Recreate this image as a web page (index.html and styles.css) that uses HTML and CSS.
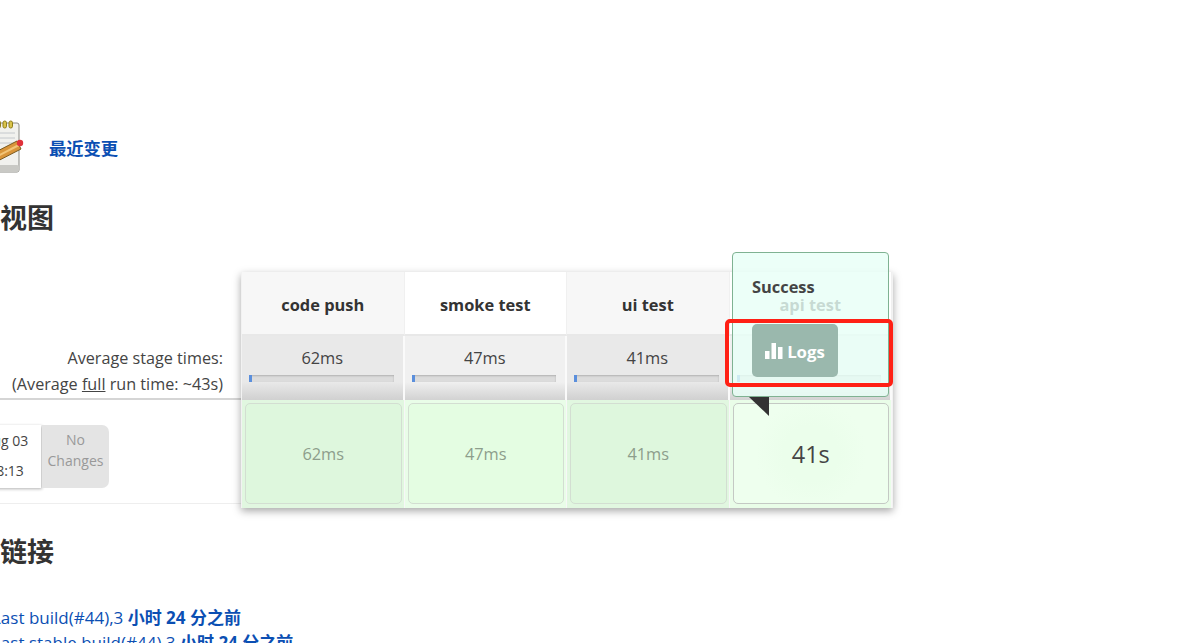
FILE: index.html
```html
<!DOCTYPE html>
<html lang="zh">
<head>
<meta charset="utf-8">
<title>Stage View</title>
<link rel="stylesheet" href="styles.css">
</head>
<body>
<main class="page">
  <div class="changes">
    <svg class="note-icon" width="48" height="56" viewBox="0 0 48 56" aria-hidden="true">
      <rect x="0" y="4" width="30" height="49" rx="2" fill="#f1f1ee" stroke="#8b8b86"/>
      <rect x="0" y="46" width="30" height="7" rx="2" fill="#c9c9c5"/>
      <g fill="#d9c34a" stroke="#8f7d1a" stroke-width="1"><rect x="2" y="2" width="3.500" height="7" rx="1.700"/><rect x="8" y="2" width="3.500" height="7" rx="1.700"/><rect x="14" y="2" width="3.500" height="7" rx="1.700"/><rect x="20" y="2" width="3.500" height="7" rx="1.700"/></g>
      <g stroke="#c4c8cc"><path d="M4 14h22M4 19h22M4 24h22"/></g>
      <path d="M-5 39 L28 22 L32 30 L-1 47 Z" fill="#d9953a" stroke="#7a5a20"/>
      <path d="M-3 43 L30 26" stroke="#f2c578" stroke-width="2"/>
      <circle cx="31" cy="24" r="3.200" fill="#e0313a"/>
    </svg>
    <a class="changes-link" href="#">最近变更</a>
  </div>
  <h2 class="heading heading-stage">阶段视图</h2>
  <section class="stage-view">
    <div class="labels">
      <div class="label-head"></div>
      <div class="label-avg">
        <div>Average stage times:</div>
        <div>(Average <u>full</u> run time: ~43s)</div>
      </div>
      <div class="label-build">
        <div class="build-date"><div>Aug 03</div><div>08:13</div></div>
        <div class="no-changes">No<br>Changes</div>
      </div>
    </div>
    <div class="stage-table">
      <div class="cols">
        <div class="head head-alt">code push</div>
        <div class="head">smoke test</div>
        <div class="head head-alt">ui test</div>
        <div class="head">api test</div>
        <div class="avg avg-alt"><span>62ms</span><div class="bar"><i class="fill"></i></div></div>
        <div class="avg"><span>47ms</span><div class="bar"><i class="fill"></i></div></div>
        <div class="avg avg-alt"><span>41ms</span><div class="bar"><i class="fill"></i></div></div>
        <div class="avg"><span>41s</span><div class="bar"><i class="fill"></i></div></div>
        <div class="slot slot-alt"><div class="cell cell-alt">62ms</div></div>
        <div class="slot"><div class="cell">47ms</div></div>
        <div class="slot slot-alt"><div class="cell cell-alt">41ms</div></div>
        <div class="slot"><div class="cell cell-hover">41s</div></div>
      </div>
      <div class="popup">
        <div class="popup-title">Success</div>
        <div class="logs"><svg width="18" height="16" viewBox="0 0 18 16" aria-hidden="true"><path fill="#fff" d="M0 8h4.500v8H0zM6.500 0H11v16H6.500zM13 4h4.500v12H13z"/></svg><span>Logs</span></div>
      </div>
      <div class="popup-tip"></div>
      <div class="mark"></div>
    </div>
  </section>
  <h2 class="heading heading-links">相关链接</h2>
  <ul class="links">
    <li><a href="#">Last build(#44),3 <b>小时 24 分之前</b></a></li>
    <li><a href="#">Last stable build(#44),3 <b>小时 24 分之前</b></a></li>
  </ul>
</main>
</body>
</html>
```
FILE: styles.css
```css
html, body {
  margin: 0;
  height: 100%;
  overflow: hidden;
  background: #fff;
}
body {
  font-family: "Open Sans", "Noto Sans CJK SC", sans-serif;
  color: #333;
  font-size: 16.400px;
}
.page {
  width: 1194px;
  height: 643px;
  overflow: hidden;
  padding-top: 119px;
  box-sizing: border-box;
}
.changes {
  display: flex;
  align-items: center;
  height: 56px;
  margin-left: -11px;
}
.note-icon { flex: none; overflow: visible; }
.changes-link {
  margin-left: 12px;
  color: #0b4fb3;
  font-weight: 700;
  font-size: 17.300px;
  text-decoration: none;
}
.heading {
  margin: 0;
  font-size: 27px;
  line-height: 36px;
  font-weight: 700;
  color: #333;
  font-family: "Noto Sans CJK SC", sans-serif;
}
.heading-stage { margin: 24px 0 0 -54px; }
.heading-links { margin: 25px 0 0 -54px; }
.stage-view {
  display: flex;
  margin-top: 37px;
  height: 236px;
}
.labels {
  width: 241px;
  flex: none;
  display: flex;
  flex-direction: column;
}
.label-head { height: 64px; }
.label-avg {
  height: 64px;
  box-sizing: border-box;
  padding-right: 18px;
  text-align: right;
  font-size: 16.200px;
  line-height: 26px;
  padding-top: 9px;
  color: #444;
  border-bottom: 2px solid #d5d5d5;
}
.label-avg u { text-decoration: underline; }
.label-build {
  height: 104px;
  box-sizing: border-box;
  display: flex;
  padding-top: 25px;
  align-items: flex-start;
  margin-left: -29px;
  border-bottom: 1px solid #eee;
}
.build-date {
  width: 70px;
  height: 63px;
  flex: none;
  box-sizing: border-box;
  text-align: center;
  white-space: nowrap;
  padding-top: 1px;
  font-size: 14px;
  line-height: 30px;
  background: #fff;
  color: #444;
  box-shadow: 1px 1px 3px rgba(0,0,0,.3);
}
.no-changes {
  width: 67px;
  height: 63px;
  flex: none;
  box-sizing: border-box;
  margin-left: 1px;
  background: #e4e4e4;
  border-radius: 0 7px 7px 0;
  text-align: center;
  color: #999;
  font-size: 14px;
  line-height: 21px;
  padding-top: 4px;
}
.stage-table {
  position: relative;
  width: 652px;
  height: 236px;
  padding: 0 1px;
  box-sizing: border-box;
  background: #f2f2f2;
  box-shadow: 0 3px 8px rgba(0,0,0,.35);
}
.cols {
  display: grid;
  grid-template-columns: repeat(4, 162.500px);
  grid-template-rows: 64px 64px 108px;
  height: 236px;
}
.head {
  display: flex;
  align-items: center;
  justify-content: center;
  padding-top: 3px;
  font-weight: 700;
  background: #fff;
  border-bottom: 2px solid #e8e8e8;
  border-right: 1px solid #f0f0f0;
  box-sizing: border-box;
}
.head-alt { background: #f7f7f7; }
.avg {
  box-sizing: border-box;
  padding-top: 9px;
  text-align: center;
  background: linear-gradient(#f0f0f0 72%, #d2d2d2);
  border-right: 2px solid #fafafa;
  line-height: 26px;
  color: #444;
}
.avg-alt { background: linear-gradient(#e9e9e9 72%, #d0d0d0); }
.bar {
  height: 7px;
  margin: 4px 9px 0 7px;
  background: #dcdcdc;
  box-shadow: inset 0 1px 2px rgba(0,0,0,.2);
}
.fill {
  display: block;
  width: 3px;
  height: 7px;
  background: #5b8fdc;
}
.slot {
  padding: 3px 2px 4px 3px;
  background: #e9fde8;
  border-right: 1px solid #f7f7f7;
  box-sizing: border-box;
}
.slot-alt { background: #e1f7e0; }
.cell {
  display: flex;
  align-items: center;
  justify-content: center;
  height: 101px;
  border: 1px solid #d3ded2;
  border-radius: 5px;
  background: #e4fde2;
  color: #8d9e8c;
  box-sizing: border-box;
}
.cell-alt { background: #def7dd; }
.cell-hover {
  background: radial-gradient(circle at center, #ebfeeb 30%, #eeffee 60%);
  border: 1px solid #c4c9c4;
  color: #444;
  font-size: 23.500px;
}
.popup {
  position: absolute;
  left: 491px;
  top: -20px;
  width: 157px;
  height: 145px;
  box-sizing: border-box;
  padding: 23px 19px 0;
  border: 1px solid #7fb292;
  border-radius: 4px;
  background: rgba(232,255,246,.82);
}
.popup-title {
  font-weight: 700;
  line-height: 22px;
  color: #444;
}
.logs {
  display: flex;
  align-items: center;
  justify-content: center;
  gap: 4px;
  width: 86px;
  height: 53px;
  margin-top: 26px;
  border-radius: 5px;
  background: #9ab8ad;
  color: #fff;
  font-weight: 700;
  font-size: 16.800px;
}
.logs span { padding-top: 1px; }
.popup-tip {
  position: absolute;
  left: 508px;
  top: 125px;
  width: 20px;
  height: 19px;
  background: #333;
  clip-path: polygon(0 0, 100% 0, 100% 100%);
}
.mark {
  position: absolute;
  left: 484px;
  top: 47px;
  width: 168px;
  height: 68px;
  box-sizing: border-box;
  border: 4px solid #ff2015;
  border-radius: 5px;
}
.links {
  list-style: none;
  margin: 36px 0 0 -8px;
  padding: 0;
  font-size: 17px;
  line-height: 25px;
}
.links a {
  color: #0b4fb3;
  text-decoration: none;
}
```
